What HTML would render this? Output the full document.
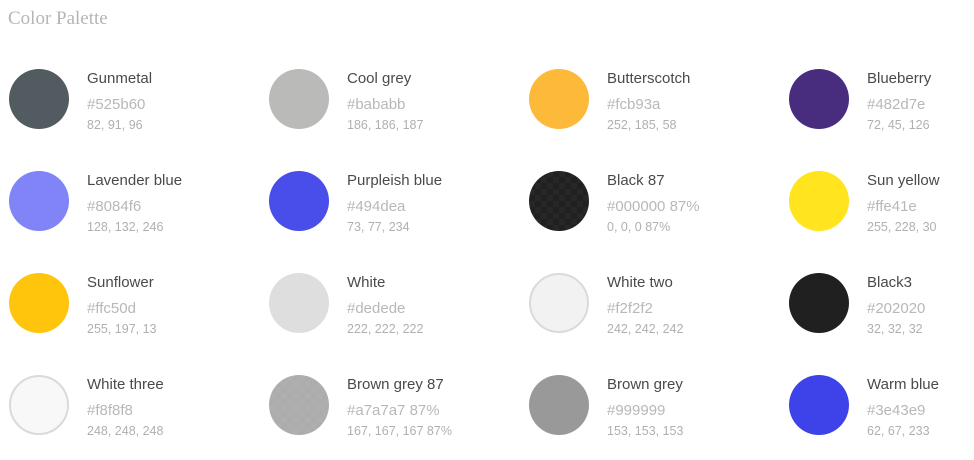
<!DOCTYPE html>
<html><head><style>
body{margin:0;background:#fff;width:974px;height:460px;overflow:hidden;font-family:"Liberation Sans",sans-serif;position:relative}
h1{position:absolute;left:8px;top:8px;margin:0;font:19px "Liberation Serif",serif;color:#b5b5b5}
.s{position:absolute;width:260px;height:70px}
.c{position:absolute;left:0;top:0;width:60px;height:60px;border-radius:50%;box-sizing:border-box}
.n{position:absolute;left:78px;top:1px;font-size:15px;color:#4a4a4a;white-space:nowrap}
.h{position:absolute;left:78px;top:27px;font-size:15px;color:#b8b8b8;white-space:nowrap}
.r{position:absolute;left:78px;top:49px;font-size:12.5px;color:#b0b0b0;white-space:nowrap}
.ck{background-image:linear-gradient(45deg,rgba(255,255,255,.03) 25%,transparent 25%,transparent 75%,rgba(255,255,255,.03) 75%),linear-gradient(45deg,rgba(255,255,255,.03) 25%,transparent 25%,transparent 75%,rgba(255,255,255,.03) 75%);background-size:12px 12px;background-position:0 0,6px 6px}
</style></head><body>
<h1>Color Palette</h1>
<div class="s" style="left:9px;top:69px"><div class="c" style="background:#525b60"></div><div class="n">Gunmetal</div><div class="h">#525b60</div><div class="r">82, 91, 96</div></div>
<div class="s" style="left:269px;top:69px"><div class="c" style="background:#babab9"></div><div class="n">Cool grey</div><div class="h">#bababb</div><div class="r">186, 186, 187</div></div>
<div class="s" style="left:529px;top:69px"><div class="c" style="background:#fcb93a"></div><div class="n">Butterscotch</div><div class="h">#fcb93a</div><div class="r">252, 185, 58</div></div>
<div class="s" style="left:789px;top:69px"><div class="c" style="background:#482d7e"></div><div class="n">Blueberry</div><div class="h">#482d7e</div><div class="r">72, 45, 126</div></div>

<div class="s" style="left:9px;top:171px"><div class="c" style="background:#8084f6"></div><div class="n">Lavender blue</div><div class="h">#8084f6</div><div class="r">128, 132, 246</div></div>
<div class="s" style="left:269px;top:171px"><div class="c" style="background:#494dea"></div><div class="n">Purpleish blue</div><div class="h">#494dea</div><div class="r">73, 77, 234</div></div>
<div class="s" style="left:529px;top:171px"><div class="c ck" style="background-color:#202020"></div><div class="n">Black 87</div><div class="h">#000000 87%</div><div class="r">0, 0, 0 87%</div></div>
<div class="s" style="left:789px;top:171px"><div class="c" style="background:#ffe41e"></div><div class="n">Sun yellow</div><div class="h">#ffe41e</div><div class="r">255, 228, 30</div></div>

<div class="s" style="left:9px;top:273px"><div class="c" style="background:#ffc50d"></div><div class="n">Sunflower</div><div class="h">#ffc50d</div><div class="r">255, 197, 13</div></div>
<div class="s" style="left:269px;top:273px"><div class="c" style="background:#dedede"></div><div class="n">White</div><div class="h">#dedede</div><div class="r">222, 222, 222</div></div>
<div class="s" style="left:529px;top:273px"><div class="c" style="background:#f2f2f2;border:2px solid #dadada"></div><div class="n">White two</div><div class="h">#f2f2f2</div><div class="r">242, 242, 242</div></div>
<div class="s" style="left:789px;top:273px"><div class="c" style="background:#202020"></div><div class="n">Black3</div><div class="h">#202020</div><div class="r">32, 32, 32</div></div>

<div class="s" style="left:9px;top:375px"><div class="c" style="background:#f8f8f8;border:2px solid #dadada"></div><div class="n">White three</div><div class="h">#f8f8f8</div><div class="r">248, 248, 248</div></div>
<div class="s" style="left:269px;top:375px"><div class="c ck" style="background-color:#acacac"></div><div class="n">Brown grey 87</div><div class="h">#a7a7a7 87%</div><div class="r">167, 167, 167 87%</div></div>
<div class="s" style="left:529px;top:375px"><div class="c" style="background:#999"></div><div class="n">Brown grey</div><div class="h">#999999</div><div class="r">153, 153, 153</div></div>
<div class="s" style="left:789px;top:375px"><div class="c" style="background:#3e43e9"></div><div class="n">Warm blue</div><div class="h">#3e43e9</div><div class="r">62, 67, 233</div></div>
</body></html>
